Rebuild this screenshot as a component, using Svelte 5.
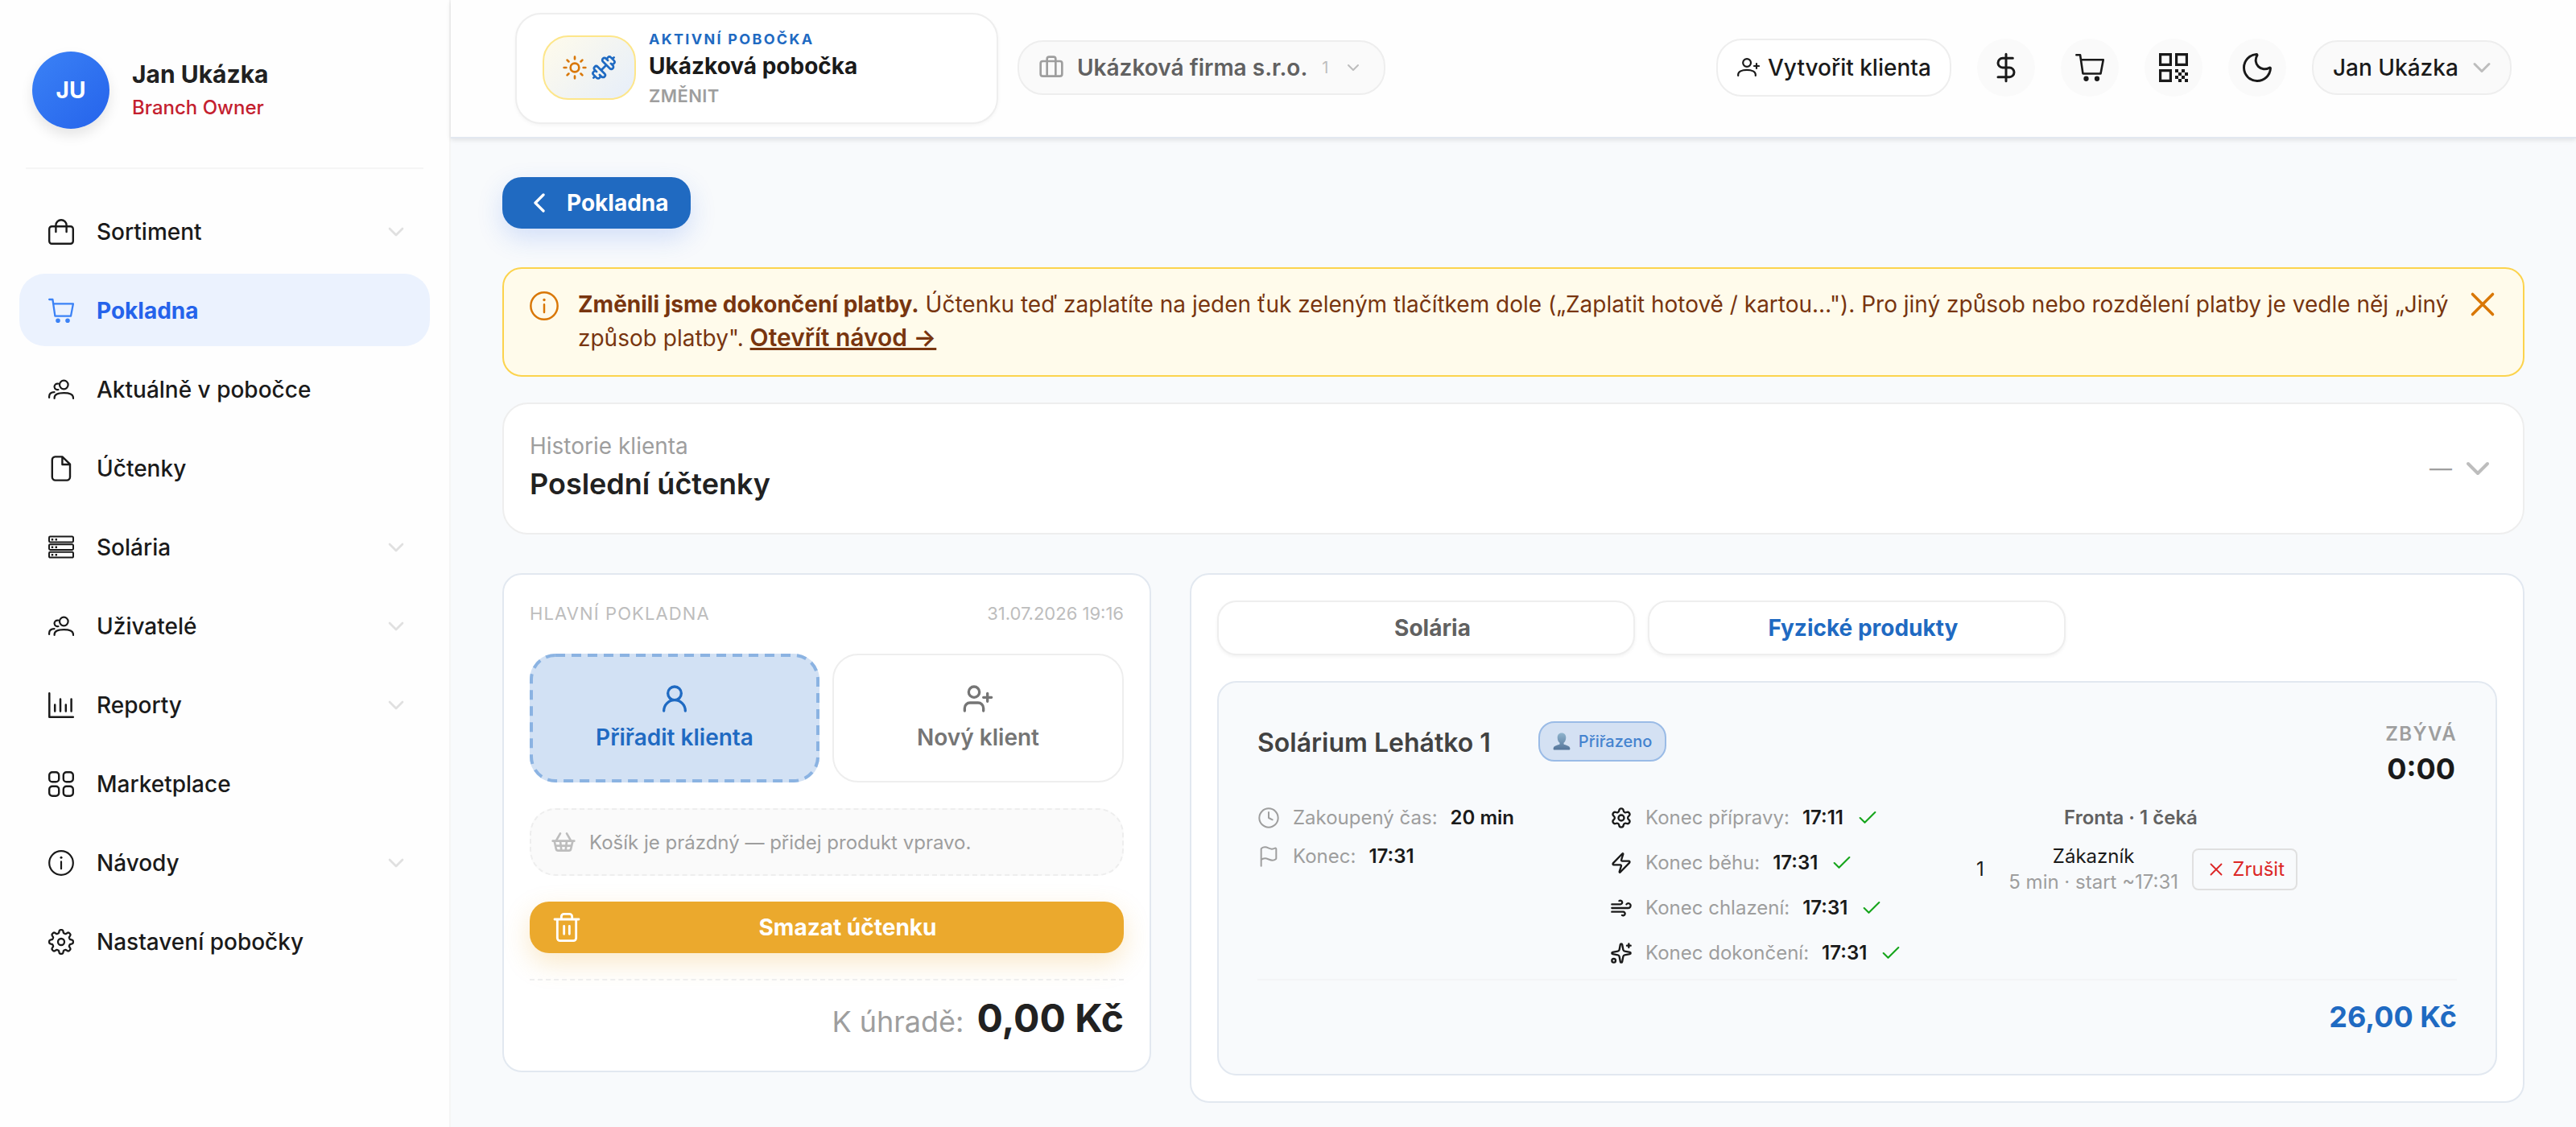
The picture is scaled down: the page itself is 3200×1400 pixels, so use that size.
<script>
    // Stroke icons: b = viewBox size, w = stroke width, d = outline, f = filled parts
    const icons = {
        bag: { b: 32, w: 2.4, d: 'M4.4 9.2h23.2a3.2 3.2 0 0 1 3.2 3.2v15.2a3.2 3.2 0 0 1-3.2 3.2H4.4a3.2 3.2 0 0 1-3.2-3.2V12.4a3.2 3.2 0 0 1 3.2-3.2zM9.4 16V7.8a6.6 6.6 0 0 1 13.2 0V16' },
        cart: { b: 32, w: 2.3, d: 'M1.2 2h4.2l3 20.6h19.6L30.9 7.4H6.2', f: 'M9.2 28.2a2.8 2.8 0 1 0 5.6 0a2.8 2.8 0 1 0-5.6 0zM21.2 28.2a2.8 2.8 0 1 0 5.6 0a2.8 2.8 0 1 0-5.6 0z' },
        users: { b: 32, w: 2.2, d: 'M14 10a5.3 5.3 0 1 0 10.6 0a5.3 5.3 0 1 0-10.6 0zM7.6 27v-.8c0-3.8 4.6-6 11.7-6s11.7 2.2 11.7 6v.8M12 8.6a3.8 3.8 0 1 0 .4 7.4M1.1 26v-1.6c0-3 2.4-5 6.4-5.2' },
        file: { b: 32, w: 2.4, d: 'M8.4 1.4h9L27 10.6v16a4 4 0 0 1-4 4H8.8a4 4 0 0 1-4-4V5.2a3.8 3.8 0 0 1 3.6-3.8zM17.4 1.8v9.2h9.4' },
        server: { b: 32, w: 2, d: 'M2.4 2.6h27.2a1.4 1.4 0 0 1 1.4 1.4v4a1.4 1.4 0 0 1-1.4 1.4H2.4A1.4 1.4 0 0 1 1 8V4a1.4 1.4 0 0 1 1.4-1.4zM2.4 12.2h27.2a1.4 1.4 0 0 1 1.4 1.4v4a1.4 1.4 0 0 1-1.4 1.4H2.4A1.4 1.4 0 0 1 1 17.6v-4a1.4 1.4 0 0 1 1.4-1.4zM2.4 21.8h27.2a1.4 1.4 0 0 1 1.4 1.4v4a1.4 1.4 0 0 1-1.4 1.4H2.4A1.4 1.4 0 0 1 1 27.2v-4a1.4 1.4 0 0 1 1.4-1.4z', f: 'M3.8 5h2.4v2.4H3.8zM8.6 5H11v2.4H8.6zM3.8 14.5h2.4v2.4H3.8zM8.6 14.5H11v2.4H8.6zM3.8 24h2.4v2.4H3.8zM8.6 24H11v2.4H8.6z' },
        chart: { b: 32, w: 2.5, d: 'M1.3 1.2v29.5h29.5M8.2 15.6v8M15 8.6v15M21.8 15.6v8M28.6 8.6v15' },
        grid: { b: 32, w: 2.4, d: 'M5 1.2h4.4a3.8 3.8 0 0 1 3.8 3.8v4.4a3.8 3.8 0 0 1-3.8 3.8H5a3.8 3.8 0 0 1-3.8-3.8V5A3.8 3.8 0 0 1 5 1.2zM22.6 1.2H27A3.8 3.8 0 0 1 30.8 5v4.4a3.8 3.8 0 0 1-3.8 3.8h-4.4a3.8 3.8 0 0 1-3.8-3.8V5a3.8 3.8 0 0 1 3.8-3.8zM5 18.8h4.4a3.8 3.8 0 0 1 3.8 3.8V27a3.8 3.8 0 0 1-3.8 3.8H5A3.8 3.8 0 0 1 1.2 27v-4.4A3.8 3.8 0 0 1 5 18.8zM22.6 18.8H27a3.8 3.8 0 0 1 3.8 3.8V27a3.8 3.8 0 0 1-3.8 3.8h-4.4a3.8 3.8 0 0 1-3.8-3.8v-4.4a3.8 3.8 0 0 1 3.8-3.8z' },
        info: { b: 32, w: 2.2, d: 'M1.2 16a14.8 14.8 0 1 0 29.6 0a14.8 14.8 0 1 0-29.6 0zM16 14.4v8.8', f: 'M14.5 9.3a1.5 1.5 0 1 0 3 0a1.5 1.5 0 1 0-3 0z' },
        gear: { b: 32, w: 2.3, d: gear(8) + 'M12 16a4 4 0 1 0 8 0a4 4 0 1 0-8 0z' },
        down: { b: 24, w: 2, d: 'M6 9l6 6 6-6' },
        left: { b: 24, w: 2, d: 'M15 18l-6-6 6-6' },
        close: { b: 24, w: 1.7, d: 'M18 6L6 18M6 6l12 12' },
        check: { b: 24, w: 1.8, d: 'M20 6L9 17l-5-5' },
        sun: { b: 24, w: 2, d: 'M8 12a4 4 0 1 0 8 0a4 4 0 1 0-8 0zM12 2v2M12 20v2M4.93 4.93l1.41 1.41M17.66 17.66l1.41 1.41M2 12h2M20 12h2M6.34 17.66l-1.41 1.41M19.07 4.93l-1.41 1.41' },
        dumbbell: { b: 24, w: 2, d: 'M17.596 12.768a2 2 0 1 0 2.829-2.829l-1.768-1.767a2 2 0 0 0 2.828-2.829l-2.828-2.828a2 2 0 0 0-2.829 2.828l-1.767-1.768a2 2 0 1 0-2.829 2.829zM2.5 21.5l1.4-1.4M20.1 3.9l1.4-1.4M5.343 21.485a2 2 0 1 0 2.829-2.828l1.767 1.768a2 2 0 1 0 2.829-2.829l-6.364-6.364a2 2 0 1 0-2.829 2.829l1.768 1.767a2 2 0 0 0-2.828 2.829zM9.6 14.4l4.8-4.8' },
        briefcase: { b: 24, w: 2, d: 'M4 6h16a2 2 0 0 1 2 2v10a2 2 0 0 1-2 2H4a2 2 0 0 1-2-2V8a2 2 0 0 1 2-2zM16 20V4a2 2 0 0 0-2-2h-4a2 2 0 0 0-2 2v16' },
        userAdd: { b: 28, w: 2.2, d: 'M7.2 8a4.9 4.9 0 1 0 9.8 0a4.9 4.9 0 1 0-9.8 0zM1.2 24v-1.4c0-3.6 4.4-5.8 10.8-5.8s10.8 2.2 10.8 5.8V24M24 9v6M21 12h6' },
        dollar: { b: 24, w: 1.8, d: 'M12 2v20M17 5H9.5a3.5 3.5 0 0 0 0 7h5a3.5 3.5 0 0 1 0 7H6' },
        qr: { b: 36, w: 3.2, d: 'M1.6 1.6h12.8v12.8H1.6zM21.6 1.6h12.8v12.8H21.6zM1.6 21.6h12.8v12.8H1.6z', nocap: true, f: 'M20 20h4v4h-4zM28 20h4v4h-4zM24 24h4v4h-4zM32 24h4v4h-4zM20 28h4v4h-4zM28 28h4v4h-4zM24 32h4v4h-4zM32 32h4v4h-4z' },
        moon: { b: 24, w: 1.6, d: 'M20.985 12.486a9 9 0 1 1-9.473-9.472c.405-.022.617.46.402.803a6 6 0 0 0 8.268 8.268c.344-.215.825-.004.803.401' },
        user: { b: 24, w: 2, d: 'M7 8a5 5 0 1 0 10 0a5 5 0 1 0-10 0zM20 21a8 8 0 0 0-16 0' },
        userPlus: { b: 24, w: 2, d: 'M16 21v-2a4 4 0 0 0-4-4H6a4 4 0 0 0-4 4v2M5 7a4 4 0 1 0 8 0a4 4 0 1 0-8 0zM19 8v6M22 11h-6' },
        basket: { b: 24, w: 2, d: 'M15 11l-1 9M19 11l-4-7M2 11h20M3.5 11l1.6 7.4a2 2 0 0 0 2 1.6h9.8a2 2 0 0 0 2-1.6l1.7-7.4M4.5 15.5h15M5 11l4-7M9 11l1 9' },
        trash: { b: 24, w: 1.7, d: 'M10 11v6M14 11v6M19 6v14a2 2 0 0 1-2 2H7a2 2 0 0 1-2-2V6M3 6h18M8 6V4a2 2 0 0 1 2-2h4a2 2 0 0 1 2 2v2' },
        clock: { b: 24, w: 1.7, d: 'M2 12a10 10 0 1 0 20 0a10 10 0 1 0-20 0zM12 6v6l4 2' },
        flag: { b: 24, w: 1.7, d: 'M4 22V4a1 1 0 0 1 .4-.8A6 6 0 0 1 8 2c3 0 5 2 7.333 2q2 0 3.067-.8A1 1 0 0 1 20 4v10a1 1 0 0 1-.4.8A6 6 0 0 1 16 16c-3 0-5-2-8-2a6 6 0 0 0-4 1.528' },
        settings: { b: 24, w: 2, d: 'M9.671 4.136a2.34 2.34 0 0 1 4.659 0 2.34 2.34 0 0 0 3.319 1.915 2.34 2.34 0 0 1 2.33 4.033 2.34 2.34 0 0 0 0 3.831 2.34 2.34 0 0 1-2.33 4.033 2.34 2.34 0 0 0-3.319 1.915 2.34 2.34 0 0 1-4.659 0 2.34 2.34 0 0 0-3.32-1.915 2.34 2.34 0 0 1-2.33-4.033 2.34 2.34 0 0 0 0-3.831A2.34 2.34 0 0 1 6.35 6.051a2.34 2.34 0 0 0 3.319-1.915M9 12a3 3 0 1 0 6 0a3 3 0 1 0-6 0z' },
        zap: { b: 24, w: 2, d: 'M4 14a1 1 0 0 1-.78-1.63l9.9-10.2a.5.5 0 0 1 .86.46l-1.92 6.02A1 1 0 0 0 13 10h7a1 1 0 0 1 .78 1.63l-9.9 10.2a.5.5 0 0 1-.86-.46l1.92-6.02A1 1 0 0 0 11 14z' },
        wind: { b: 24, w: 2, d: 'M12.8 19.6A2 2 0 1 0 14 16H2M17.5 8a2.5 2.5 0 1 1 2 4H2M9.8 4.4A2 2 0 1 1 11 8H2' },
        sparkles: { b: 24, w: 2, d: 'M11.017 2.814a1 1 0 0 1 1.966 0l1.051 5.558a2 2 0 0 0 1.594 1.594l5.558 1.051a1 1 0 0 1 0 1.966l-5.558 1.051a2 2 0 0 0-1.594 1.594l-1.051 5.558a1 1 0 0 1-1.966 0l-1.051-5.558a2 2 0 0 0-1.594-1.594l-5.558-1.051a1 1 0 0 1 0-1.966l5.558-1.051a2 2 0 0 0 1.594-1.594zM20 2v4M22 4h-4M2 20a2 2 0 1 0 4 0a2 2 0 1 0-4 0z' }
    };

    // Rounded cog outline in a 32x32 box
    function gear(teeth) {
        let path = '';
        for (let i = 0; i < 160; i++) {
            const angle = (i / 160) * Math.PI * 2;
            const r = 13 + 1.9 * Math.tanh(2.2 * Math.cos(teeth * angle));
            path += (i ? 'L' : 'M') + (16 + r * Math.cos(angle)).toFixed(2) + ' ' + (16 + r * Math.sin(angle)).toFixed(2);
        }
        return path + 'Z';
    }

    const menu = [
        { label: 'Sortiment', icon: 'bag', sub: true },
        { label: 'Pokladna', icon: 'cart' },
        { label: 'Aktuálně v pobočce', icon: 'users' },
        { label: 'Účtenky', icon: 'file' },
        { label: 'Solária', icon: 'server', sub: true },
        { label: 'Uživatelé', icon: 'users', sub: true },
        { label: 'Reporty', icon: 'chart', sub: true },
        { label: 'Marketplace', icon: 'grid' },
        { label: 'Návody', icon: 'info', sub: true },
        { label: 'Nastavení pobočky', icon: 'gear' }
    ];

    const phases = [
        { label: 'Konec přípravy:', icon: 'settings', time: '17:11' },
        { label: 'Konec běhu:', icon: 'zap', time: '17:31' },
        { label: 'Konec chlazení:', icon: 'wind', time: '17:31' },
        { label: 'Konec dokončení:', icon: 'sparkles', time: '17:31' }
    ];

    let activePage = $state('Pokladna');
    let activeTab = $state('Fyzické produkty');
    let showNotice = $state(true);
</script>

{#snippet icon(name, size)}
    <svg width={size} height={size} viewBox="0 0 {icons[name].b} {icons[name].b}" fill="none" stroke="currentColor"
        stroke-width={icons[name].w} stroke-linecap={icons[name].nocap ? 'butt' : 'round'} stroke-linejoin={icons[name].nocap ? 'miter' : 'round'}>
        <path d={icons[name].d} />
        {#if icons[name].f}
            <path d={icons[name].f} fill="currentColor" stroke="none" />
        {/if}
    </svg>
{/snippet}

<div class="app">
    <aside class="sidebar">
        <div class="profile">
            <div class="avatar">JU</div>
            <div>
                <div class="profile-name">Jan Ukázka</div>
                <div class="profile-role">Branch Owner</div>
            </div>
        </div>
        <nav>
            {#each menu as item}
                <button class="nav-item" class:active={item.label === activePage} onclick={() => (activePage = item.label)}>
                    {@render icon(item.icon, 32)}
                    <span class="nav-label">{item.label}</span>
                    {#if item.sub}
                        <span class="nav-arrow">{@render icon('down', 32)}</span>
                    {/if}
                </button>
            {/each}
        </nav>
    </aside>

    <div class="main">
        <header>
            <div class="branch">
                <div class="branch-icons">
                    <span class="sun">{@render icon('sun', 32)}</span>
                    <span class="dumbbell">{@render icon('dumbbell', 32)}</span>
                </div>
                <div>
                    <div class="branch-label">AKTIVNÍ POBOČKA</div>
                    <div class="branch-name">Ukázková pobočka</div>
                    <div class="branch-change">ZMĚNIT</div>
                </div>
            </div>
            <button class="company">
                {@render icon('briefcase', 32)}
                <span class="company-name">Ukázková firma s.r.o.</span>
                <span class="company-count">1</span>
                <span class="company-arrow">{@render icon('down', 24)}</span>
            </button>
            <div class="header-actions">
                <button class="create">{@render icon('userAdd', 28)}Vytvořit klienta</button>
                <button class="round">{@render icon('dollar', 40)}</button>
                <button class="round">{@render icon('cart', 36)}</button>
                <button class="round">{@render icon('qr', 36)}</button>
                <button class="round">{@render icon('moon', 44)}</button>
                <button class="account">Jan Ukázka <span class="account-arrow">{@render icon('down', 36)}</span></button>
            </div>
        </header>

        <div class="content">
            <button class="back">{@render icon('left', 40)}Pokladna</button>

            {#if showNotice}
                <div class="notice">
                    <span class="notice-icon">{@render icon('info', 36)}</span>
                    <p>
                        <strong>Změnili jsme dokončení platby.</strong> Účtenku teď zaplatíte na jeden ťuk zeleným tlačítkem dole („Zaplatit hotově / kartou…"). Pro jiný způsob nebo rozdělení platby je vedle něj „Jiný způsob platby". <a href="#navod">Otevřít návod →</a>
                    </p>
                    <button class="notice-close" onclick={() => (showNotice = false)}>{@render icon('close', 50)}</button>
                </div>
            {/if}

            <section class="history">
                <div>
                    <div class="history-label">Historie klienta</div>
                    <h2>Poslední účtenky</h2>
                </div>
                <div class="history-right"><span>—</span>{@render icon('down', 48)}</div>
            </section>

            <div class="columns">
                <section class="card receipt">
                    <div class="receipt-head">
                        <span class="receipt-title">HLAVNÍ POKLADNA</span>
                        <span>31.07.2026 19:16</span>
                    </div>
                    <div class="client-buttons">
                        <button class="client assign">
                            <svg class="dashes" width="360" height="160">
                                <rect x="2" y="2" width="356" height="156" rx="30" />
                            </svg>
                            {@render icon('user', 40)}<span>Přiřadit klienta</span>
                        </button>
                        <button class="client">{@render icon('userPlus', 40)}<span>Nový klient</span></button>
                    </div>
                    <div class="empty">{@render icon('basket', 32)}<span>Košík je prázdný — přidej produkt vpravo.</span></div>
                    <button class="clear">{@render icon('trash', 40)}<span>Smazat účtenku</span></button>
                    <div class="total">
                        <span class="total-label">K úhradě:</span>
                        <span class="total-value">0,00 Kč</span>
                    </div>
                </section>

                <section class="card products">
                    <div class="tabs">
                        {#each ['Solária', 'Fyzické produkty'] as tab}
                            <button class="tab" class:selected={tab === activeTab} onclick={() => (activeTab = tab)}>{tab}</button>
                        {/each}
                    </div>

                    <div class="bed">
                        <div class="bed-head">
                            <h3>Solárium Lehátko 1</h3>
                            <div class="badge">
                                <svg width="22" height="22" viewBox="0 0 22 22">
                                    <defs>
                                        <linearGradient id="bust" x1="0" y1="0" x2="0" y2="1">
                                            <stop offset="0" stop-color="#8fb4cd" />
                                            <stop offset="1" stop-color="#55759a" />
                                        </linearGradient>
                                    </defs>
                                    <path fill="url(#bust)" d="M11 .5c3.5 0 5.3 2.4 5.3 5.7 0 2.9-1.2 5.3-2.8 6.6v1.7c2.5 1.1 7 1.8 7.7 4.4.3 1.1.3 2.6-.7 2.6H1.5c-1 0-1-1.5-.7-2.6.7-2.6 5.2-3.3 7.7-4.4v-1.7C6.9 11.5 5.7 9.1 5.7 6.2 5.7 2.9 7.5.5 11 .5z" />
                                </svg>
                                Přiřazeno
                            </div>
                            <div class="remaining">
                                <div class="remaining-label">ZBÝVÁ</div>
                                <div class="remaining-time">0:00</div>
                            </div>
                        </div>

                        <div class="bed-grid">
                            <div class="info-list">
                                <div class="row muted">{@render icon('clock', 28)}<span class="row-label">Zakoupený čas:</span><b>20 min</b></div>
                                <div class="row muted">{@render icon('flag', 28)}<span class="row-label">Konec:</span><b>17:31</b></div>
                            </div>
                            <div class="phase-list">
                                {#each phases as phase}
                                    <div class="row">
                                        {@render icon(phase.icon, 28)}
                                        <span class="row-label">{phase.label}</span>
                                        <b>{phase.time}</b>
                                        <span class="done">{@render icon('check', 28)}</span>
                                    </div>
                                {/each}
                            </div>
                            <div class="queue">
                                <div class="queue-title">Fronta · 1 čeká</div>
                                <div class="queue-row">
                                    <span class="queue-order">1</span>
                                    <div class="queue-customer">
                                        <div>Zákazník</div>
                                        <div class="queue-meta">5 min · start ~17:31</div>
                                    </div>
                                    <button class="cancel">{@render icon('close', 26)}Zrušit</button>
                                </div>
                            </div>
                        </div>

                        <div class="price">26,00 Kč</div>
                    </div>
                </section>
            </div>
        </div>
    </div>
</div>

<style>
    :global(body) {
        background: #f8fafc;
    }

    .app {
        display: flex;
        width: 3200px;
        height: 1400px;
        overflow: hidden;
        font-family: Inter, "Liberation Sans", sans-serif;
        font-size: 28px;
        color: #1a1a1a;
        background: #f8fafc;
    }

    .app * {
        box-sizing: border-box;
    }

    svg {
        display: block;
        flex: none;
    }

    button {
        display: flex;
        align-items: center;
        margin: 0;
        padding: 0;
        border: none;
        background: none;
        font: inherit;
        color: inherit;
        white-space: nowrap;
        cursor: pointer;
    }

    /* Sidebar */
    .sidebar {
        flex: none;
        width: 560px;
        padding: 48px 24px 0;
        background: #fefefe;
        border-right: 2px solid #f5f5f5;
    }

    .profile {
        display: flex;
        align-items: center;
        gap: 28px;
        height: 162px;
        margin: 0 8px 32px;
        padding: 0 8px 32px;
        border-bottom: 2px solid #f5f5f5;
    }

    .avatar {
        display: flex;
        align-items: center;
        justify-content: center;
        width: 96px;
        height: 96px;
        border-radius: 50%;
        background: linear-gradient(135deg, #3b82f6, #2563eb);
        box-shadow: 0 8px 16px rgba(0, 0, 0, 0.1);
        color: white;
        font-weight: 700;
    }

    .profile-name {
        font-size: 30px;
        font-weight: 700;
        line-height: 43px;
        color: #212121;
    }

    .profile-role {
        font-size: 24px;
        font-weight: 500;
        line-height: 39px;
        color: #c4202f;
    }

    nav {
        display: flex;
        flex-direction: column;
        gap: 8px;
    }

    .nav-item {
        height: 90px;
        padding: 2px 24px 0 36px;
        border-radius: 32px;
        font-weight: 500;
    }

    .nav-label {
        margin-left: 28px;
    }

    .nav-arrow {
        margin-left: auto;
        padding-right: 2px;
        color: #e0e0e0;
    }

    .nav-item.active {
        background: #ebf2fe;
        color: #3b82f6;
    }

    .nav-item.active .nav-label {
        color: #2563eb;
        font-weight: 700;
    }

    /* Header */
    .main {
        flex: 1;
        min-width: 0;
    }

    header {
        display: flex;
        align-items: center;
        height: 172px;
        padding: 0 80px;
        background: #fefefe;
        border-bottom: 2px solid #e2e8f0;
        box-shadow: 0 2px 6px rgba(0, 0, 0, 0.1);
    }

    .branch {
        display: flex;
        align-items: center;
        gap: 16px;
        width: 600px;
        height: 138px;
        padding: 0 32px;
        background: white;
        border: 2px solid #eeeeee;
        border-radius: 32px;
        box-shadow: 0 2px 4px rgba(0, 0, 0, 0.04);
    }

    .branch-icons {
        display: flex;
        align-items: center;
        justify-content: center;
        gap: 4px;
        width: 116px;
        height: 80px;
        margin-bottom: 2px;
        border: 2px solid #fde68a;
        border-radius: 32px;
        background: linear-gradient(135deg, #fffbeb, #e6eefa);
    }

    .sun {
        color: #d97706;
    }

    .dumbbell {
        color: #1f6ac2;
    }

    .branch-label {
        font-size: 18px;
        font-weight: 700;
        line-height: 27px;
        letter-spacing: 2.3px;
        color: #1f6ac2;
    }

    .branch-name {
        font-weight: 700;
        line-height: 40px;
    }

    .branch-change {
        font-size: 22px;
        font-weight: 600;
        line-height: 34px;
        letter-spacing: 0.4px;
        color: #9e9e9e;
    }

    .company {
        height: 68px;
        margin: 0 0 2px 24px;
        padding: 0 26px 0 24px;
        border: 2px solid #eeeeee;
        border-radius: 32px;
        background: #fafafa;
        color: #9e9e9e;
    }

    .company-name {
        margin-left: 16px;
        font-weight: 600;
        color: #616161;
    }

    .company-count {
        margin: 0 19px 0 18px;
        font-size: 20px;
        color: #bdbdbd;
    }

    .company-arrow {
        color: #bdbdbd;
    }

    .header-actions {
        display: flex;
        align-items: center;
        gap: 32px;
        margin: 0 0 2px auto;
        font-weight: 500;
    }

    .create {
        gap: 10px;
        width: 292px;
        height: 72px;
        padding-left: 24px;
        border: 2px solid #eeeeee;
        border-radius: 32px;
        background: white;
    }

    .round {
        justify-content: center;
        width: 72px;
        height: 72px;
        border-radius: 50%;
        background: #fafafa;
    }

    .account {
        width: 248px;
        height: 68px;
        padding-left: 24px;
        border: 2px solid #eeeeee;
        border-radius: 32px;
        background: #fafafa;
    }

    .account-arrow {
        margin-left: 11px;
        color: #bdbdbd;
    }

    /* Page content */
    .content {
        padding: 48px 64px 0;
    }

    .back {
        gap: 14px;
        width: 234px;
        height: 64px;
        padding-left: 26px;
        border-radius: 24px;
        background: #206ac1;
        box-shadow: 0 12px 32px rgba(37, 99, 235, 0.18);
        color: white;
        font-weight: 700;
    }

    .notice {
        display: flex;
        align-items: flex-start;
        height: 136px;
        margin-top: 48px;
        padding: 23px 32px 0;
        border: 2px solid #fcd34d;
        border-radius: 24px;
        background: #fffbeb;
        color: #78350f;
    }

    .notice-icon {
        margin-top: 5px;
        color: #d97706;
    }

    .notice p {
        flex: 1;
        margin: 0 0 0 24px;
        line-height: 42px;
    }

    .notice strong {
        font-weight: 700;
    }

    .notice a {
        color: inherit;
        font-size: 30px;
        font-weight: 600;
        line-height: 40px;
        text-decoration: underline;
    }

    .notice-close {
        margin: -4px -7px 0 14px;
        color: #d97706;
    }

    .history {
        display: flex;
        align-items: center;
        justify-content: space-between;
        height: 164px;
        margin-top: 32px;
        padding: 0 32px;
        border: 2px solid #eeeeee;
        border-radius: 32px;
        background: white;
    }

    .history-label {
        line-height: 40px;
        color: #9e9e9e;
    }

    h2 {
        margin: 0 0 2px;
        font-size: 36px;
        font-weight: 600;
        line-height: 54px;
        color: #212121;
    }

    .history-right {
        display: flex;
        align-items: center;
        gap: 8px;
        color: #bdbdbd;
    }

    .history-right span {
        color: #9e9e9e;
    }

    .columns {
        display: flex;
        align-items: flex-start;
        gap: 48px;
        margin-top: 48px;
    }

    .card {
        padding: 32px;
        border: 2px solid #e2e8f0;
        border-radius: 24px;
        background: white;
    }

    /* Receipt */
    .receipt {
        width: 806px;
        height: 620px;
    }

    .receipt-head {
        display: flex;
        justify-content: space-between;
        margin-bottom: 34px;
        font-size: 22px;
        line-height: 32px;
        color: #bdbdbd;
    }

    .receipt-title {
        letter-spacing: 1.1px;
    }

    .client-buttons {
        display: flex;
        gap: 16px;
    }

    .client {
        flex: 1;
        flex-direction: column;
        justify-content: center;
        gap: 8px;
        height: 160px;
        border: 2px solid #eeeeee;
        border-radius: 32px;
        font-weight: 600;
        line-height: 40px;
        color: #757575;
    }

    .client.assign {
        position: relative;
        flex: none;
        width: 360px;
        border: none;
        background: #d2e1f4;
        color: #1f6ac2;
    }

    .dashes {
        position: absolute;
        inset: 0;
        fill: none;
        stroke: #8bb3e2;
        stroke-width: 4;
        stroke-dasharray: 12 8;
    }

    .empty {
        display: flex;
        align-items: center;
        gap: 16px;
        height: 84px;
        margin: 32px 0;
        padding: 0 24px;
        border: 2px dashed #eeeeee;
        border-radius: 32px;
        background: #fafafa;
        font-size: 24px;
        color: #9e9e9e;
    }

    .empty svg {
        color: #bdbdbd;
    }

    .clear {
        width: 100%;
        height: 64px;
        padding: 0 24px 0 26px;
        border-radius: 24px;
        background: #eba92d;
        box-shadow: 0 12px 32px rgba(235, 169, 45, 0.25);
        color: white;
        font-weight: 700;
    }

    .clear span {
        flex: 1;
        padding-left: 10px;
    }

    .total {
        display: flex;
        align-items: baseline;
        justify-content: flex-end;
        gap: 16px;
        margin-top: 32px;
        padding-top: 18px;
        border-top: 2px dashed #eeeeee;
    }

    .total-label {
        font-size: 36px;
        color: #9e9e9e;
    }

    .total-value {
        font-size: 48px;
        font-weight: 700;
        line-height: 58px;
        color: #212121;
    }

    /* Products */
    .products {
        flex: 1;
        height: 658px;
    }

    .tabs {
        display: flex;
        gap: 16px;
        margin-bottom: 32px;
    }

    .tab {
        justify-content: center;
        width: 519px;
        height: 68px;
        padding-left: 16px;
        border: 2px solid #eeeeee;
        border-radius: 24px;
        background: white;
        box-shadow: 0 2px 4px rgba(0, 0, 0, 0.05);
        font-weight: 700;
        color: #616161;
    }

    .tab.selected {
        color: #1f6ac2;
    }

    .bed {
        height: 490px;
        padding: 48px;
        border: 2px solid #e2e8f0;
        border-radius: 24px;
        background: #f8fafc;
        font-size: 24px;
    }

    .bed-head {
        display: flex;
        align-items: flex-start;
        height: 102px;
    }

    h3 {
        margin: 0;
        font-size: 32px;
        font-weight: 600;
        line-height: 53px;
        color: #424242;
    }

    .badge {
        display: flex;
        align-items: center;
        gap: 10px;
        height: 50px;
        margin-left: 59px;
        padding: 0 16px;
        border: 2px solid #9abbe6;
        border-radius: 20px;
        background: #d4e1f3;
        font-size: 20px;
        font-weight: 500;
        color: #4483cf;
    }

    .remaining {
        margin-left: auto;
        text-align: right;
    }

    .remaining-label {
        font-weight: 600;
        line-height: 31px;
        letter-spacing: 1.4px;
        color: #9e9e9e;
    }

    .remaining-time {
        padding-right: 2px;
        font-size: 36px;
        font-weight: 700;
        line-height: 56px;
    }

    .bed-grid {
        display: grid;
        grid-template-columns: 414px 414px 418px;
        gap: 24px;
        height: 218px;
        line-height: 36px;
    }

    .info-list,
    .phase-list {
        display: flex;
        flex-direction: column;
        gap: 12px;
    }

    .phase-list {
        gap: 20px;
    }

    .row {
        display: flex;
        align-items: center;
    }

    .row.muted svg {
        color: #9e9e9e;
    }

    .row-label {
        margin: 0 16px;
        color: #9e9e9e;
    }

    .row b {
        font-weight: 600;
    }

    .done {
        margin-left: 16px;
        color: #16a51c;
    }

    .queue {
        text-align: center;
    }

    .queue-title {
        font-weight: 600;
        color: #616161;
    }

    .queue-row {
        display: flex;
        align-items: center;
        margin-top: 14px;
        line-height: 32px;
    }

    .queue-order {
        width: 44px;
    }

    .queue-customer {
        flex: 1;
        padding-right: 4px;
    }

    .queue-meta {
        color: #9e9e9e;
    }

    .cancel {
        gap: 7px;
        height: 52px;
        margin-right: 2px;
        padding: 0 14px 0 15px;
        border: 2px solid #e0e0e0;
        border-radius: 8px;
        color: #dc2626;
    }

    .price {
        padding-top: 22px;
        border-top: 2px solid #f3f4f6;
        font-size: 36px;
        font-weight: 700;
        line-height: 46px;
        text-align: right;
        color: #1f6ac2;
    }
</style>
